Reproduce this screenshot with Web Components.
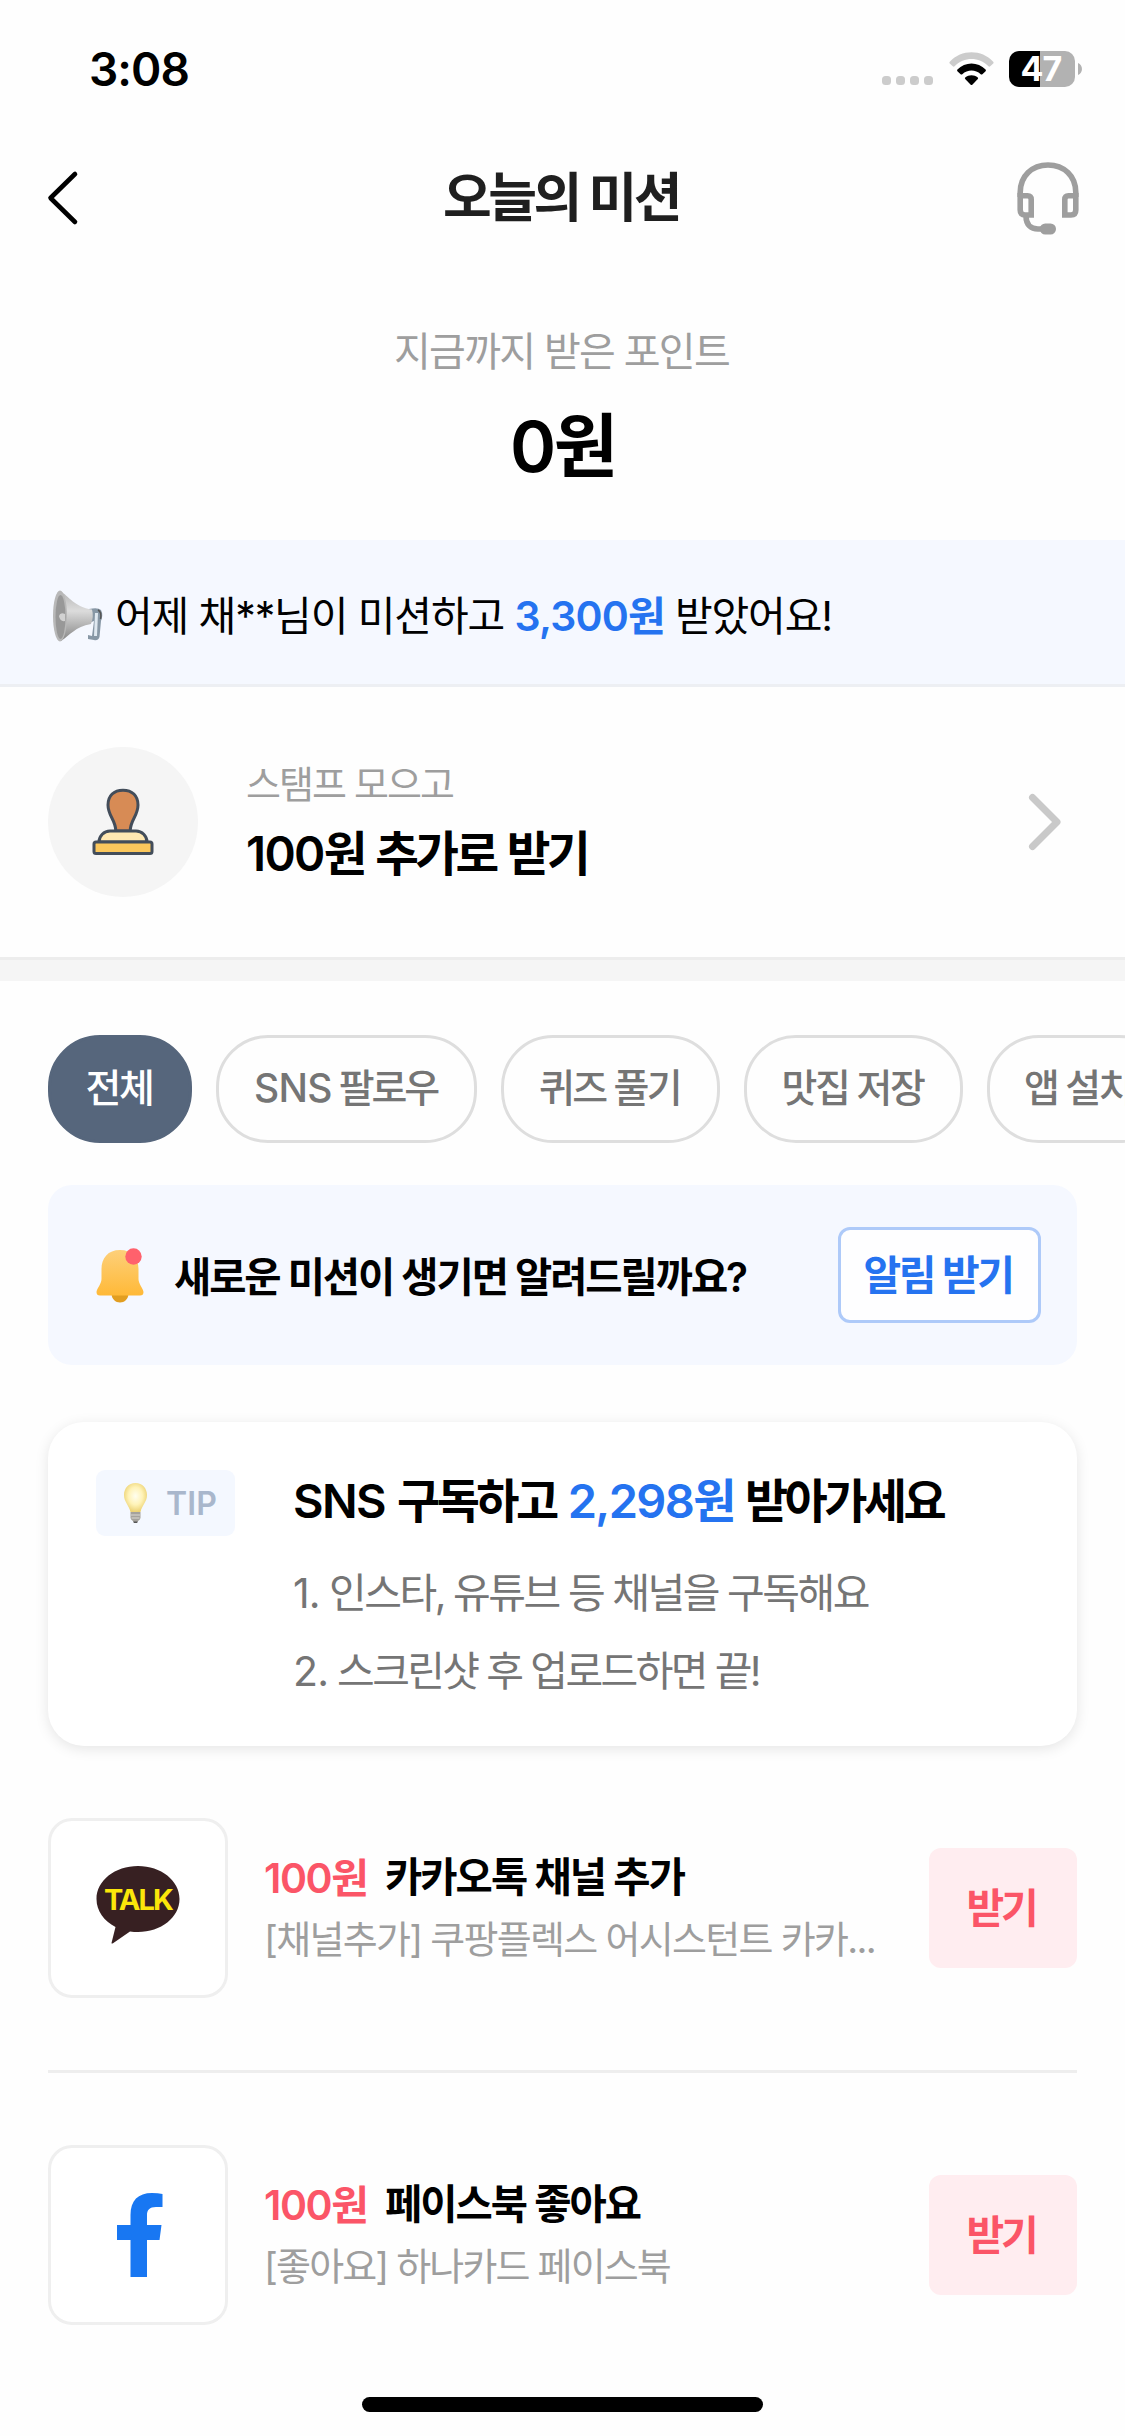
<!DOCTYPE html>
<html lang="ko">
<head>
<meta charset="utf-8">
<title>오늘의 미션</title>
<style>
html,body{margin:0;padding:0;background:#fefefe}
body{width:1125px;height:2436px;overflow:hidden;font-family:Inter,"Noto Sans CJK KR",sans-serif;color:#000}
</style>
</head>
<body>
<mission-app></mission-app>
<script>
const define = (name, html, setup) => {
  const tpl = document.createElement('template');
  tpl.innerHTML = html;
  customElements.define(name, class extends HTMLElement {
    connectedCallback() {
      if (this.shadowRoot) return;
      this.attachShadow({mode: 'open'}).append(tpl.content.cloneNode(true));
      if (setup) setup(this);
    }
  });
};

define('mission-app', `
<style>
:host{display:flex;flex-direction:column;width:1125px;height:2436px;overflow:hidden;background:#fefefe}
main{display:flex;flex-direction:column;padding:0 48px}
hr{border:0;margin:72px 0;height:3px;background:#eee}
mission-alert{margin-top:42px}
tip-card{margin:57px 0 72px}
</style>
<status-bar></status-bar>
<nav-bar></nav-bar>
<points-summary></points-summary>
<notice-banner></notice-banner>
<stamp-row></stamp-row>
<chip-row>
  <filter-chip active w="144"><fit-text w="67" size="39">전체</fit-text></filter-chip>
  <filter-chip w="261"><fit-text w="183" size="39">SNS 팔로우</fit-text></filter-chip>
  <filter-chip w="219"><fit-text w="141" size="39">퀴즈 풀기</fit-text></filter-chip>
  <filter-chip w="219"><fit-text w="142" size="39">맛집 저장</fit-text></filter-chip>
  <filter-chip w="184"><fit-text w="108" size="39">앱 설치</fit-text></filter-chip>
</chip-row>
<main>
  <mission-alert></mission-alert>
  <tip-card></tip-card>
  <mission-item>
    <talk-logo slot="logo"></talk-logo>
    <fit-text slot="reward" w="103" size="41" weight="600">100원</fit-text>
    <fit-text slot="title" w="299" size="40.5" weight="600">카카오톡 채널 추가</fit-text>
    <fit-text slot="desc" w="611" size="38">[채널추가] 쿠팡플렉스 어시스턴트 카카...</fit-text>
  </mission-item>
  <hr>
  <mission-item>
    <facebook-logo slot="logo"></facebook-logo>
    <fit-text slot="reward" w="103" size="41" weight="600">100원</fit-text>
    <fit-text slot="title" w="255" size="40.5" weight="600">페이스북 좋아요</fit-text>
    <fit-text slot="desc" w="406" size="38">[좋아요] 하나카드 페이스북</fit-text>
  </mission-item>
</main>
<home-indicator></home-indicator>
`);

define('status-bar', `
<style>
:host{display:flex;height:138px;align-items:center;justify-content:space-between;padding:0 43px 0 89px;box-sizing:border-box}
.icons{display:flex;align-items:center}
.dots{display:flex;gap:5px;margin:23px 16px 0 0}
.dots i{width:9px;height:9px;border-radius:3.5px;background:#ccc}
svg{display:block}
.bat{display:flex;align-items:center;justify-content:center;width:66px;height:36px;border-radius:10px;margin:0 3px 0 15px;padding-right:2px;box-sizing:border-box;color:#fff;font:700 34px/36px Inter,sans-serif;letter-spacing:-1px;background:linear-gradient(90deg,#000 31px,#b2b2b2 31px)}
</style>
<fit-text w="100" size="46" weight="600">3:08</fit-text>
<div class="icons">
  <div class="dots"><i></i><i></i><i></i><i></i></div>
  <svg width="45" height="34" viewBox="0 0 45 34">
    <path d="M0.8 9.8C12.5-2.8 32.5-2.8 44.2 9.8Q45 10.8 44.2 11.6L41.2 14.3Q40.3 15 39.4 14.2C29.8 4.6 15.2 4.6 5.6 14.2Q4.700 15 3.800 14.300L0.800 11.600Q0 10.800 0.800 9.800Z" fill="#ccc"/>
    <path d="M8.4 17.600C16 9.400 29 9.400 36.600 17.600Q37.300 18.500 36.600 19.300L33.400 22.200Q32.500 22.900 31.700 22.200C26.500 17.300 18.500 17.300 13.300 22.200Q12.500 22.900 11.600 22.200L8.400 19.300Q7.700 18.500 8.400 17.600Z"/>
    <path d="M16.200 25.400C19.800 22.400 25.200 22.400 28.800 25.400Q29.500 26.100 28.800 27L23.300 32.700Q22.500 33.500 21.700 32.700L16.200 27Q15.500 26.100 16.200 25.400Z"/>
  </svg>
  <div class="bat">47</div>
  <svg width="4" height="12" viewBox="0 0 4 12"><path d="M0 0C5.300 2 5.300 10 0 12Z" fill="#b2b2b2"/></svg>
</div>
`);

define('nav-bar', `
<style>
:host{display:grid;grid-template-columns:200px 1fr 200px;height:120px;align-items:center;justify-items:center}
svg{display:block}
.back{justify-self:start;margin-left:46px}
.title{color:#1f1f1f;margin-right:3px}
.cs{justify-self:end;margin-right:46px}
</style>
<svg class="back" width="34" height="56" viewBox="0 0 34 56" fill="none" stroke="#000" stroke-width="4.600" stroke-linecap="round" stroke-linejoin="round"><path d="M29 4L4.500 28L29 52"/></svg>
<fit-text class="title" w="236" size="53" weight="600">오늘의 미션</fit-text>
<svg class="cs" width="62" height="73" viewBox="0 0 62 73" fill="none" stroke="#9e9e9e" stroke-width="5.600">
  <path d="M3.200 35V30.500C3.200 14 15 3 31 3S58.800 14 58.800 30.500V35"/>
  <path d="M3.200 33.700H10.500Q14.200 33.700 14.200 37.500V53H8Q3.200 53 3.200 48ZM58.800 33.700H51.500Q47.800 33.700 47.800 37.500V53H54Q58.800 53 58.800 48Z"/>
  <path d="M9 54C9 63 14 67 21 67H27"/>
  <rect x="22.800" y="61.500" width="16.200" height="11" rx="5.500" fill="#9e9e9e" stroke="none"/>
</svg>
`);

define('points-summary', `
<style>
:host{display:flex;flex-direction:column;align-items:center;height:282px;padding:64px 2px 0 0;box-sizing:border-box}
.amount{margin-top:20px}
</style>
<fit-text w="335" size="40" style="color:#9e9e9e">지금까지 받은 포인트</fit-text>
<fit-text class="amount" w="103" size="70" weight="600" lh="90">0원</fit-text>
`);

define('notice-banner', `
<style>
:host{display:flex;align-items:center;height:147px;box-sizing:border-box;border-bottom:3px solid #edeff3;background:#f5f8ff;padding:7px 0 0 52px;gap:12px}
.blue{color:#2573f0;font-weight:600}
svg{display:block}
</style>
<svg width="51" height="52" viewBox="0 0 51 52">
  <defs><linearGradient id="h" x1="0" y1="0" x2="0" y2="1"><stop offset="0" stop-color="#b5b5b5"/><stop offset=".4" stop-color="#dcdcdc"/><stop offset="1" stop-color="#858585"/></linearGradient></defs>
  <path d="M37 19Q46 17 49 20Q51.500 25 49 31L47.500 47Q46 51 42 50L36 49V45L40 46L42 31L37 33Z" fill="#8797a5"/>
  <path d="M44.500 23L43.500 46" stroke="#dfe8f0" stroke-width="3"/>
  <path d="M46 20Q50 22 48.500 29" stroke="#555" stroke-width="1.500" fill="none"/>
  <path d="M8 1C17 6 22 17 40 19.500Q42 27 39 34C23 37 18 45 9 51Z" fill="url(#h)"/>
  <ellipse cx="8" cy="26" rx="7" ry="25.500" fill="#b8b8b8"/>
  <ellipse cx="8.500" cy="27" rx="5" ry="22" fill="#989898"/>
  <path d="M7 26Q8 22 13 24V31Q8 32 7 26Z" fill="#d2d2d2"/>
</svg>
<fit-text w="717" size="41">어제 채**님이 미션하고 <span class="blue">3,300원</span> 받았어요!</fit-text>
`);

define('stamp-row', `
<style>
:host{display:flex;height:294px;box-sizing:border-box;padding:60px 63px 0 48px;border-bottom:21px solid #f5f5f5;box-shadow:inset 0 -3px #ededed}
.circle{width:150px;height:150px;border-radius:50%;background:#f5f5f5;display:flex;align-items:center;justify-content:center}
.txt{flex:1;display:flex;flex-direction:column;padding:7px 0 0 48px;gap:10px}
svg{display:block}
.go{margin-top:46px}
</style>
<div class="circle">
  <svg width="62" height="68" viewBox="0 0 62 68" stroke="#434d5a" stroke-width="3" stroke-linejoin="round">
    <path d="M23.800 43C23.800 32 16 28 16 17C16 7.500 22 2.200 31 2.200S46 7.500 46 17C46 28 38.200 32 38.200 43Z" fill="#d78b55"/>
    <path d="M7 54C7 48 12 43 18 43H44C50 43 55 48 55 54Z" fill="#ffe8b2"/>
    <rect x="2" y="54" width="58" height="11.500" rx="2" fill="#fbc75c"/>
  </svg>
</div>
<div class="txt">
  <fit-text w="207" size="38" style="color:#9e9e9e">스탬프 모으고</fit-text>
  <fit-text w="341" size="47.5" weight="600" gap="3">100원 추가로 받기</fit-text>
</div>
<svg class="go" width="36" height="58" viewBox="0 0 36 58" fill="none" stroke="#c9c9c9" stroke-width="7" stroke-linecap="round" stroke-linejoin="round"><path d="M6.500 4.500L31 29L6.500 53.500"/></svg>
`);

define('chip-row', `
<style>:host{display:flex;gap:24px;padding:54px 0 0 48px;overflow:hidden}</style><slot></slot>
`);

define('filter-chip', `
<style>
:host{display:flex;flex:none;align-items:center;justify-content:center;height:108px;box-sizing:border-box;padding:0 2px 2px 0;border:3px solid #dedede;border-radius:52px;color:#757575;font-weight:500}
:host([active]){background:#56667c;border-color:#56667c;color:#fff}
</style><slot></slot>
`, el => el.style.width = el.getAttribute('w') + 'px');

define('mission-alert', `
<style>
:host{display:flex;align-items:center;height:180px;border-radius:24px;background:#f5f8ff;padding:0 36px 0 48px;box-sizing:border-box}
svg{display:block}
.msg{margin:6px auto 0 30px}
.btn{display:flex;align-items:center;justify-content:center;width:203px;height:96px;box-sizing:border-box;padding-right:3px;border:3px solid #aecaf9;border-radius:12px;background:#fefeff;color:#2573f0}
</style>
<svg width="48" height="55" viewBox="0 0 48 55">
  <defs><linearGradient id="b" x1="0" y1="0" x2="0" y2="1"><stop offset="0" stop-color="#fdd07a"/><stop offset="1" stop-color="#ffb937"/></linearGradient></defs>
  <path d="M15.500 46H32.500C32 51.500 28.500 54.500 24 54.500S16 51.500 15.500 46Z" fill="#e29e20"/>
  <path d="M24 2C12 2 5.500 10 5.500 21V31C5.500 36 1 40 .500 44Q.500 47.500 4 47.500H44Q47.500 47.500 47.500 44C47 40 42.500 36 42.500 31V21C42.500 10 36 2 24 2Z" fill="url(#b)"/>
  <circle cx="37.500" cy="8.500" r="8.200" fill="#ff616c"/>
</svg>
<fit-text class="msg" w="572" size="40.5" weight="600">새로운 미션이 생기면 알려드릴까요?</fit-text>
<div class="btn"><fit-text w="149" size="41" weight="600">알림 받기</fit-text></div>
`);

define('tip-card', `
<style>
:host{display:flex;height:324px;border-radius:36px;background:#fff;box-shadow:0 3px 14px rgba(0,0,0,.1);box-sizing:border-box;padding:48px 0 0 48px}
.badge{display:flex;align-items:center;width:139px;height:66px;border-radius:9px;background:#f4f8ff;padding-left:27px;box-sizing:border-box;color:#a9b7cc;gap:18px}
svg{display:block}
.txt{display:flex;flex-direction:column;margin-left:58px;padding-top:1px;color:#757575}
.head{color:#000;margin-bottom:32px}
.line{margin:0 0 18px}
.tip{margin-top:2px}
.blue{color:#2573f0;font-weight:600}
</style>
<div class="badge">
  <svg width="25" height="42" viewBox="0 0 25 42">
    <defs><radialGradient id="g" cx=".5" cy=".45" r=".55"><stop offset="0" stop-color="#fffef0"/><stop offset=".55" stop-color="#fff3b8"/><stop offset="1" stop-color="#ecd273"/></radialGradient></defs>
    <path d="M12.500 1C5.500 1 1 6.500 1 13C1 20 6 23 7.500 30H17.500C19 23 24 20 24 13C24 6.500 19.500 1 12.500 1Z" fill="url(#g)"/>
    <path d="M7.500 30H17.500V36Q17 38 15 39Q14 41 12.500 41T10 39Q8 38 7.500 36Z" fill="#a5a29c"/>
    <path d="M8 33H17M8.500 36H16.500" stroke="#dcd9d2" stroke-width="1"/>
    <path d="M10 39.500H15L14 41H11Z" fill="#555"/>
  </svg>
  <fit-text class="tip" w="51" size="32" weight="600" lh="40">TIP</fit-text>
</div>
<div class="txt">
  <fit-text class="head" w="650" size="47" weight="600" gap="4">SNS 구독하고 <span class="blue">2,298원</span> 받아가세요</fit-text>
  <fit-text class="line" w="575" size="41">1. 인스타, 유튜브 등 채널을 구독해요</fit-text>
  <fit-text w="466" size="41">2. 스크린샷 후 업로드하면 끝!</fit-text>
</div>
`);

define('mission-item', `
<style>
:host{display:flex;height:180px}
.tile{display:flex;align-items:center;justify-content:center;width:180px;height:180px;box-sizing:border-box;border:3px solid #efefef;border-radius:24px;background:#fff}
.txt{flex:1;display:flex;flex-direction:column;padding:30px 0 0 36px}
.top{display:flex;gap:18px}
.reward{color:#fb5567}
.desc{color:#9e9e9e;margin-top:1px}
.btn{display:flex;align-items:center;justify-content:center;width:148px;height:120px;box-sizing:border-box;padding-right:4px;margin-top:30px;border-radius:12px;background:#ffedf0;color:#fb5567}
</style>
<div class="tile"><slot name="logo"></slot></div>
<div class="txt">
  <div class="top"><div class="reward"><slot name="reward"></slot></div><slot name="title"></slot></div>
  <div class="desc"><slot name="desc"></slot></div>
</div>
<div class="btn"><fit-text w="69" size="41" weight="600">받기</fit-text></div>
`);

define('talk-logo', `
<style>
:host{display:grid;width:84px;height:78px;justify-items:center;padding-bottom:7px}
svg,fit-text{grid-area:1/1}
svg{display:block}
fit-text{color:#fbe60a;margin-top:18px;height:32px}
</style>
<svg width="84" height="78" viewBox="0 0 84 78">
  <path d="M42 0C19 0 .500 14.500 .500 33C.500 45 8 55 19.500 61L15.500 77Q15.500 78 17 77.200L34 65.500Q38 66 42 66C65 66 83.500 51.500 83.500 33S65 0 42 0Z" fill="#372022"/>
</svg>
<fit-text w="68" size="29" weight="700" lh="32">TALK</fit-text>
`);

define('facebook-logo', `
<style>:host{display:block;margin-left:3px}svg{display:block}</style>
<svg width="48" height="84" viewBox="0 0 48 84">
  <path d="M14.500 84V47H1V32H14.500V22C14.500 7.500 22 0 36 0Q42 0 46.500 .900V14H40C33.500 14 31 17 31 22V32H45.500L43.500 47H31V84Z" fill="#1877f2"/>
</svg>
`);

define('home-indicator', `
<style>
:host{display:flex;justify-content:center;margin-top:auto;padding-bottom:24px}
i{display:block;width:401px;height:15px;border-radius:8px;background:#000}
</style><i></i>
`);

/* A single line of text set to the width given in "w". Latin runs keep a
   fixed tracking; the Hangul around them takes up the rest. */
define('fit-text', `
<style>:host{display:block;flex:none;width:max-content;white-space:nowrap;line-height:60px}</style><slot></slot>
`, el => {
  const a = n => el.getAttribute(n);
  el.style.fontSize = a('size') + 'px';
  if (a('weight')) el.style.fontWeight = a('weight');
  if (a('lh')) el.style.lineHeight = a('lh') + 'px';
  if (a('gap')) el.style.wordSpacing = a('gap') + 'px';
  let free = el.textContent.length;
  if (/[가-힣]/.test(el.textContent)) {
    const walker = document.createTreeWalker(el, NodeFilter.SHOW_TEXT), nodes = [];
    while (walker.nextNode()) nodes.push(walker.currentNode);
    for (const node of nodes) {
      node.replaceWith(...node.data.split(/([0-9A-Za-z][0-9A-Za-z,.]*)/).filter(Boolean).map(part => {
        if (!/^[0-9A-Za-z]/.test(part)) return part;
        const run = document.createElement('span');
        run.style.letterSpacing = a('weight') ? '-0.035em' : '-0.02em';
        run.textContent = part;
        free -= part.length;
        return run;
      }));
    }
  }
  const natural = el.getBoundingClientRect().width;
  el.style.letterSpacing = (a('w') - natural) / free + 'px';
});
</script>
</body>
</html>
